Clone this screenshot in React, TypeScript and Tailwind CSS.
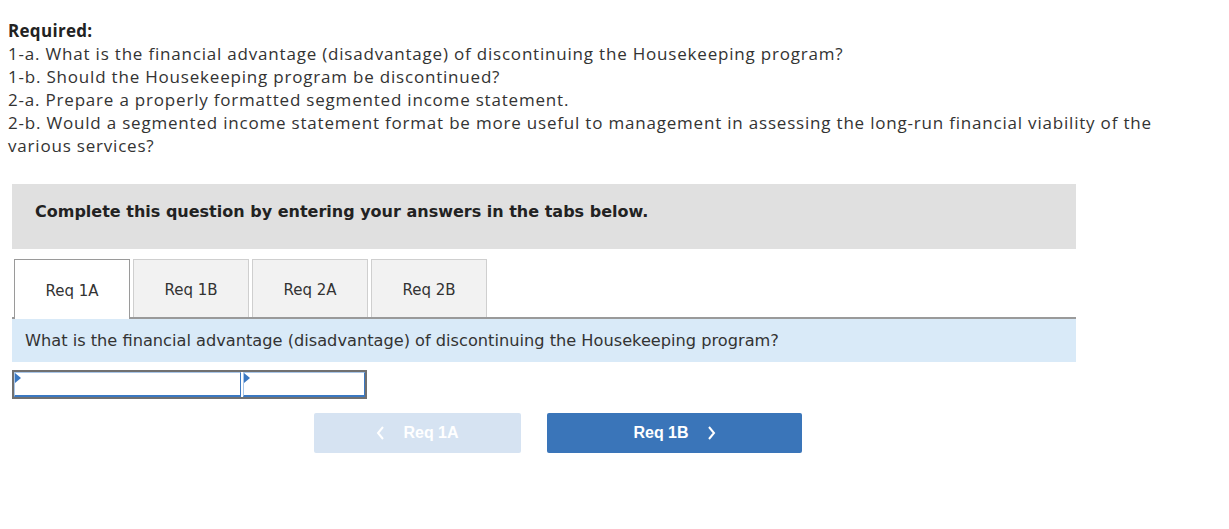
export default function App() {
  const tabs = ["Req 1A", "Req 1B", "Req 2A", "Req 2B"];
  return (
    <main className="min-h-screen bg-white text-[#333]">
      <div className="pl-2 pr-[40px] pt-[19px] font-['Open_Sans',sans-serif] text-[17px] leading-[23px] tracking-[0.8px] text-[#333]">
        <p className="font-bold tracking-[0.3px] text-[#222]">Required:</p>
        <p>1-a. What is the financial advantage (disadvantage) of discontinuing the Housekeeping program?</p>
        <p>1-b. Should the Housekeeping program be discontinued?</p>
        <p>2-a. Prepare a properly formatted segmented income statement.</p>
        <p>
          2-b. Would a segmented income statement format be more useful to management in assessing the long-run financial viability of the
          various services?
        </p>
      </div>

      <div className="ml-3 mt-[27px] w-[1064px]">
        <div className="h-[65px] bg-[#e0e0e0] px-[23px] pt-[18px] font-['DejaVu_Sans',Verdana,sans-serif] text-[16px] font-bold leading-[20px] text-[#222]">
          Complete this question by entering your answers in the tabs below.
        </div>

        <div className="mt-[10px] flex gap-[3px] border-b-2 border-[#9a9a9a] pl-[2px] font-['DejaVu_Sans',Verdana,sans-serif] text-[15px] text-[#333]">
          {tabs.map((t, i) => (
            <div
              key={t}
              className={
                i === 0
                  ? "-mb-[2px] flex h-[60px] w-[116px] items-center justify-center border border-b-0 border-[#9a9a9a] bg-white pt-[3px]"
                  : "flex h-[58px] w-[116px] items-center justify-center border border-b-0 border-[#cfcfcf] bg-[#f2f2f2] pt-[3px]"
              }
            >
              {t}
            </div>
          ))}
        </div>

        <div className="flex h-[43px] items-center bg-[#d9eaf8] px-[13px] pt-[2px] font-['DejaVu_Sans',Verdana,sans-serif] text-[16.2px] text-[#333]">
          What is the financial advantage (disadvantage) of discontinuing the Housekeeping program?
        </div>

        <div className="mt-[8px] flex w-fit border-2 border-[#707070]">
          <div className="relative h-[25px] w-[227px] border border-b-2 border-[#a9c6e8] border-b-[#3b78c1] border-r-[#3b78c1] bg-white">
            <span className="absolute left-0 top-0 h-0 w-0 border-y-[5px] border-l-[6px] border-y-transparent border-l-[#3b78c1]" />
          </div>
          <div className="ml-[2px] relative h-[25px] w-[122px] border border-b-2 border-[#a9c6e8] border-b-[#3b78c1] border-r-[#3b78c1] bg-white">
            <span className="absolute left-0 top-0 h-0 w-0 border-y-[5px] border-l-[6px] border-y-transparent border-l-[#3b78c1]" />
          </div>
        </div>

        <div className="mt-[14px] flex gap-[26px] pl-[302px] font-['Liberation_Sans',Arial,sans-serif] text-[16px] font-bold text-white">
          <div className="flex h-[40px] w-[207px] items-center justify-center gap-[18px] rounded-[2px] bg-[#d6e3f2]">
            <svg width="9" height="14" viewBox="0 0 9 14" fill="none" stroke="white" strokeWidth="2">
              <path d="M7 1L2 7l5 6" />
            </svg>
            <span>Req 1A</span>
          </div>
          <div className="flex h-[40px] w-[255px] items-center justify-center gap-[18px] rounded-[2px] bg-[#3a75b9]">
            <span>Req 1B</span>
            <svg width="9" height="14" viewBox="0 0 9 14" fill="none" stroke="white" strokeWidth="2">
              <path d="M2 1l5 6-5 6" />
            </svg>
          </div>
        </div>
      </div>
    </main>
  );
}
